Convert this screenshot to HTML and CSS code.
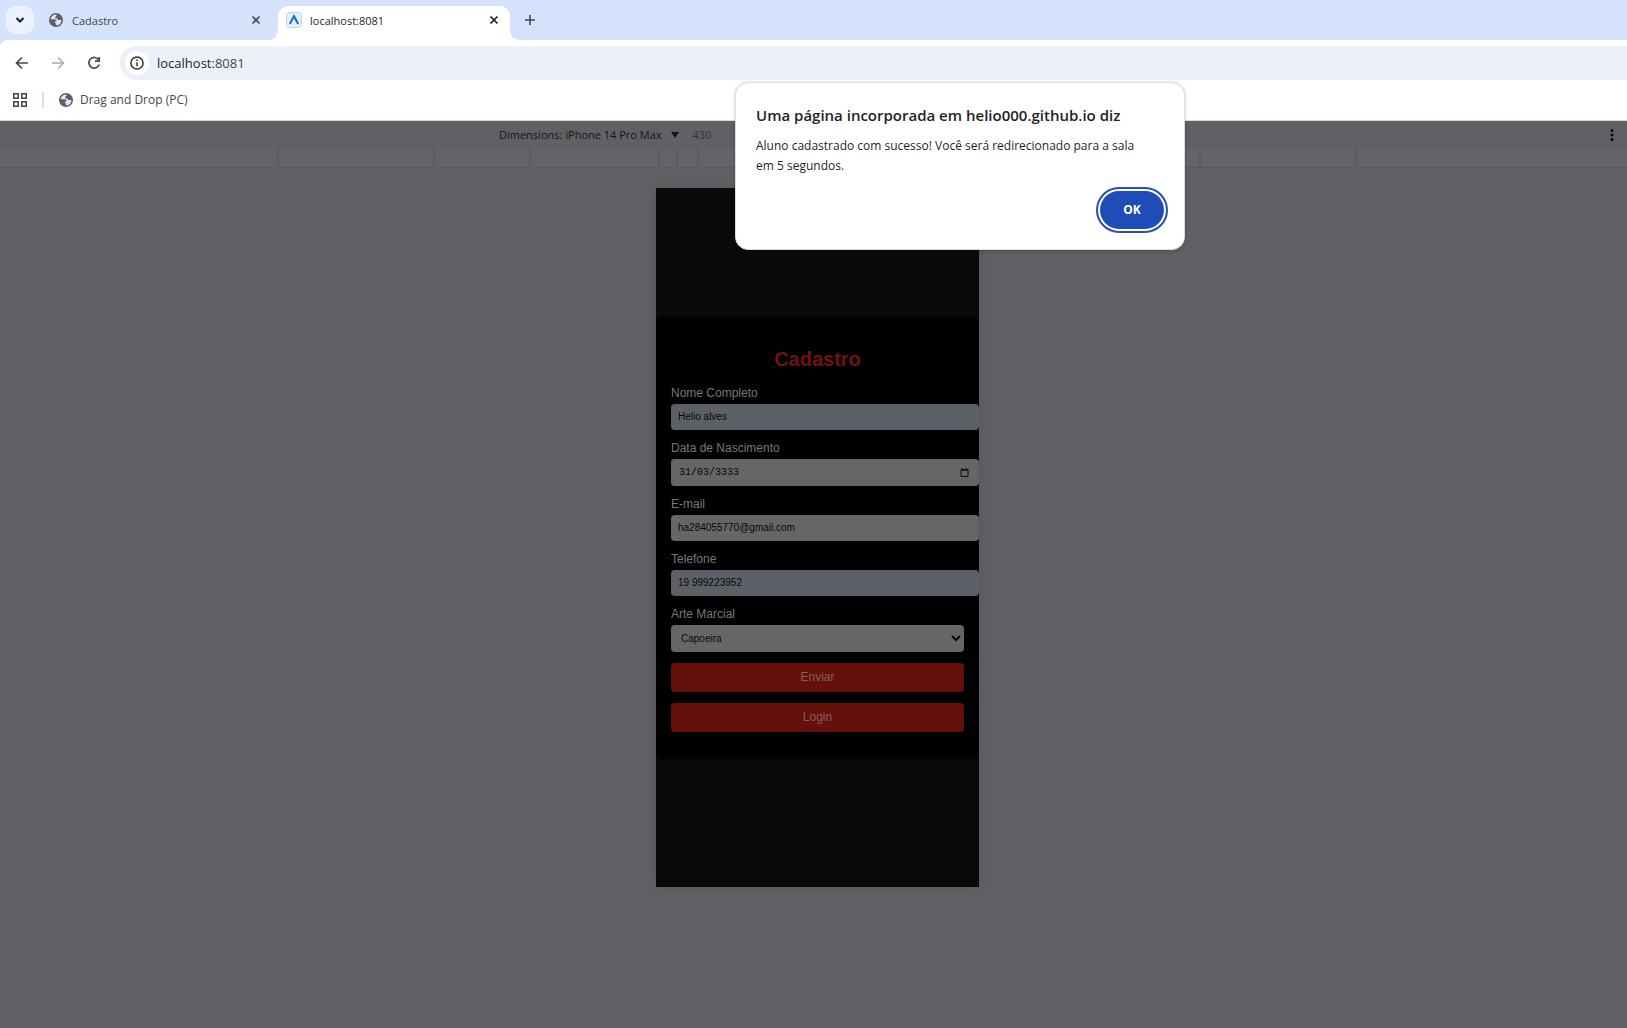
FILE: index.html
```html
<!DOCTYPE html>
<html lang="pt-BR">
<head>
<meta charset="utf-8">
<meta name="viewport" content="width=device-width, initial-scale=1">
<title>localhost:8081</title>
<link rel="stylesheet" href="styles.css">
</head>
<body>
<svg class="sprite" aria-hidden="true">
  <symbol id="globe" viewBox="0 0 14 14">
    <circle cx="7" cy="7" r="7" fill="#5c6065"/>
    <path d="M7.600 1.600C4.500 1.400 2 3.500 1.700 6.200h3.800c1.300 0 2.100.8 2.100 1.800v.6H5.900v1.700h1.200v2C10.300 12.400 12.500 10 12.400 7H10c-1 0-1.600-.6-1.600-1.500H6.200V3.700c.9 0 1.400-.8 1.400-2.100z" fill="#e0e9fb"/>
  </symbol>
  <symbol id="close" viewBox="0 0 10 10">
    <path d="M1.500 1.500l7 7M8.500 1.500l-7 7" stroke="currentColor" stroke-width="1.700" fill="none"/>
  </symbol>
</svg>

<header class="browser">
  <div class="tabstrip">
    <button class="tab-search" aria-label="Pesquisar guias"><svg width="10" height="8" viewBox="0 0 10 8"><path d="M1.500 2L5 5.500 8.500 2" fill="none" stroke="#1f1f1f" stroke-width="2"/></svg></button>
    <div class="tab">
      <svg class="globe"><use href="#globe"/></svg>
      <span class="tab-title">Cadastro</span>
      <button class="close" aria-label="Fechar"><svg><use href="#close"/></svg></button>
    </div>
    <div class="tab active">
      <svg class="favicon" viewBox="0 0 16 16"><rect x=".5" y=".5" width="15" height="15" rx="3" fill="#e3f2fe" stroke="#c5d3df"/><path d="M3.800 12L8 4.200 12.200 12" fill="none" stroke="#1668dc" stroke-width="2"/></svg>
      <span class="tab-title">localhost:8081</span>
      <button class="close" aria-label="Fechar"><svg><use href="#close"/></svg></button>
    </div>
    <button class="new-tab" aria-label="Nova guia"><svg width="12" height="12" viewBox="0 0 12 12"><path d="M6 1v10M1 6h10" stroke="#474747" stroke-width="1.600"/></svg></button>
  </div>
  <div class="toolbar">
    <nav class="nav">
      <button aria-label="Voltar"><svg width="14" height="14" viewBox="0 0 14 14"><path d="M13 7H2M7 1.500L1.500 7 7 12.500" fill="none" stroke="#474747" stroke-width="1.700"/></svg></button>
      <button aria-label="Avançar"><svg width="14" height="14" viewBox="0 0 14 14"><path d="M1 7h11M7 1.500L12.500 7 7 12.500" fill="none" stroke="#ababab" stroke-width="1.500"/></svg></button>
      <button aria-label="Recarregar"><svg width="14" height="14" viewBox="0 0 14 14"><path d="M11.700 4A5.300 5.300 0 1 0 12.200 8.500" fill="none" stroke="#474747" stroke-width="1.700"/><path d="M12.200 1v4.200H8" fill="none" stroke="#474747" stroke-width="1.700"/></svg></button>
    </nav>
    <div class="omnibox">
      <button class="site-info" aria-label="Informações do site"><svg width="14" height="14" viewBox="0 0 14 14"><circle cx="7" cy="7" r="6.100" fill="none" stroke="#333" stroke-width="1.500"/><path d="M7 6.200v4M7 3.500v1.500" stroke="#333" stroke-width="1.500"/></svg></button>
      <div class="url">localhost<span>:8081</span></div>
    </div>
  </div>
  <div class="bookmarks">
    <button class="apps" aria-label="Grupos de guias"><svg width="14" height="14" viewBox="0 0 14 14"><path d="M.8.8h4.400v4.400H.8zM8.800.8h4.400v4.400H8.800zM.8 8.800h4.400v4.400H.8zM8.800 8.800h4.400v4.400H8.800z" fill="none" stroke="#474747" stroke-width="1.600"/></svg></button>
    <a class="bookmark" href="#"><svg class="globe"><use href="#globe"/></svg>Drag and Drop (PC)</a>
  </div>
</header>

<main class="devtools">
  <div class="device-bar">
    <button class="device">Dimensions: iPhone 14 Pro Max <svg width="8" height="6" viewBox="0 0 8 6"><path d="M0 0h8L4 6z" fill="#151515"/></svg></button>
    <span class="device-width">430</span>
    <button class="more" aria-label="Mais opções"><svg width="4" height="12" viewBox="0 0 4 12"><circle cx="2" cy="1.600" r="1.500"/><circle cx="2" cy="6" r="1.500"/><circle cx="2" cy="10.400" r="1.500"/></svg></button>
  </div>
  <div class="ruler"><i class="w156"></i><i class="w96"></i><i class="w129"></i><i class="w18"></i><i class="w21"></i><i class="mid"></i><i class="w21"></i><i class="w18"></i><i class="w129"></i><i class="w96"></i><i class="last"></i></div>
  <div class="stage">
    <div class="phone">
      <form class="card">
        <h1>Cadastro</h1>
        <label for="nome">Nome Completo</label>
        <input class="filled" id="nome" type="text" value="Helio alves">
        <label for="data">Data de Nascimento</label>
        <div class="date">
          <input id="data" type="text" inputmode="numeric" value="31/03/3333">
          <svg width="9" height="9" viewBox="0 0 9 9"><path d="M1 1.500h7v7H1zM1 2.200h7M2.500 0v2M6.500 0v2" fill="none" stroke="#111"/></svg>
        </div>
        <label for="email">E-mail</label>
        <input id="email" type="email" value="ha284055770@gmail.com">
        <label for="fone">Telefone</label>
        <input class="filled" id="fone" type="tel" value="19 999223952">
        <label for="arte">Arte Marcial</label>
        <select id="arte"><option>Capoeira</option></select>
        <button type="button">Enviar</button>
        <button type="button">Login</button>
      </form>
    </div>
  </div>
</main>

<div class="dialog" role="alertdialog" aria-labelledby="dlg-title" aria-describedby="dlg-text">
  <h2 id="dlg-title">Uma página incorporada em helio000.github.io diz</h2>
  <p id="dlg-text">Aluno cadastrado com sucesso! Você será redirecionado para a sala em 5 segundos.</p>
  <button>OK</button>
</div>
</body>
</html>
```

FILE: styles.css
```css
* { box-sizing: border-box; }

body {
  margin: 0;
  min-height: 100vh;
  display: flex;
  flex-direction: column;
  position: relative;
  overflow-x: hidden;
  font: 12px/16px "Open Sans", "Noto Sans", sans-serif;
  color: #1f1f1f;
  background: #606164;
}

button {
  margin: 0;
  padding: 0;
  border: 0;
  background: none;
  font: inherit;
  color: inherit;
}

svg { display: block; flex: none; }
.sprite { position: absolute; width: 0; height: 0; }
.globe { width: 14px; height: 14px; }

/* Browser chrome */
.browser { background: #fff; border-bottom: 1px solid #d5d9dc; }

.tabstrip {
  display: flex;
  align-items: center;
  height: 40px;
  padding-left: 6px;
  background: #d4e2fc;
}

.tab-search {
  display: grid;
  place-items: center;
  width: 28px;
  height: 28px;
  margin-right: 4px;
  border-radius: 10px;
  background: #ebf2fd;
}

.tab {
  display: flex;
  align-items: center;
  gap: 9px;
  width: 240px;
  height: 28px;
  padding: 0 17px 0 11px;
  color: #474747;
}

.tab-title { flex: 1; font-size: 11px; line-height: 16px; padding-top: 1px; }

.tab.active {
  position: relative;
  align-self: flex-end;
  width: 232px;
  height: 34px;
  padding: 0 11px 6px 8px;
  gap: 8px;
  border-radius: 10px 10px 0 0;
  background: #fff;
  color: #1f1f1f;
}

.tab.active::before,
.tab.active::after {
  content: "";
  position: absolute;
  bottom: 0;
  width: 10px;
  height: 10px;
}

.tab.active::before { right: 100%; background: radial-gradient(circle at 0 0, transparent 10px, #fff 10px); }
.tab.active::after { left: 100%; background: radial-gradient(circle at 100% 0, transparent 10px, #fff 10px); }

.favicon { width: 16px; height: 16px; }
.close svg { width: 10px; height: 10px; }
.new-tab { margin-left: 14px; }

.toolbar {
  display: flex;
  align-items: center;
  height: 46px;
  padding-left: 15px;
  position: relative;
}

/* Rounded upper left corner where the toolbar meets the tab strip */
.toolbar::before {
  content: "";
  position: absolute;
  top: 0;
  left: 0;
  width: 8px;
  height: 8px;
  background: radial-gradient(circle at 100% 100%, #fff 8px, #d4e2fc 8px);
}

.nav { display: flex; gap: 22px; margin-right: 19px; }

.omnibox {
  flex: 1;
  display: flex;
  align-items: center;
  gap: 8px;
  height: 34px;
  padding-left: 5px;
  border-radius: 17px 0 0 17px;
  background: #ecf0fa;
}

.site-info {
  display: grid;
  place-items: center;
  width: 24px;
  height: 24px;
  border-radius: 50%;
  background: #fff;
}

.url { font-size: 13px; }
.url span { color: #474747; }

.bookmarks {
  display: flex;
  align-items: center;
  height: 34px;
  padding: 0 13px 6px;
}

.apps { padding-right: 15px; border-right: 2px solid #d0e0fc; height: 16px; }

.bookmark {
  display: flex;
  align-items: center;
  gap: 7px;
  margin-left: 15px;
  color: #474747;
  text-decoration: none;
}

/* Device toolbar and ruler */
.devtools { flex: 1; display: flex; flex-direction: column; }

.device-bar {
  display: flex;
  align-items: center;
  height: 26px;
  padding: 1px 13px 0 499px;
  font-size: 11px;
  color: #151515;
}

.device { display: flex; align-items: center; gap: 9px; }
.device-width { margin-left: 14px; color: #333435; }
.more { margin-left: auto; }

.ruler {
  display: flex;
  justify-content: center;
  height: 21px;
  padding: 0 0 1px 7px;
  border: solid #565a68;
  border-width: 1px 0;
  background: #636465;
}

.ruler i { flex: none; border-left: 2px solid #565c6b; }
.ruler .last { width: 158px; border-right: 2px solid #565c6b; }
.w156 { width: 156px; }
.w96 { width: 96px; }
.w129 { width: 129px; }
.w18 { width: 18px; }
.w21 { width: 21px; }
.mid { width: 238px; }

.stage {
  flex: 1;
  display: flex;
  justify-content: center;
  align-items: flex-start;
  padding: 20px 0 20px 8px;
}

/* Emulated page */
.phone {
  display: flex;
  align-items: center;
  width: 323px;
  min-height: 699px;
  overflow: hidden;
  background: #0a0a0a;
  box-shadow: 0 0 12px rgba(0, 0, 0, .12);
  font-family: "Liberation Sans", Arial, sans-serif;
}

.card {
  display: flex;
  flex-direction: column;
  flex: none;
  width: 322px;
  padding: 31px 14px 27px 15px;
  border-radius: 6px;
  background: #010101;
  box-shadow: 0 0 4px rgba(0, 0, 0, .4);
}

.card h1 {
  margin: 0 0 15px;
  font-size: 20px;
  line-height: 23px;
  text-align: center;
  color: #6c140f;
}

.card label {
  margin-bottom: 4px;
  font-size: 12px;
  line-height: 14px;
  color: #777;
}

.card input {
  width: 308px;
  height: 26px;
  margin: 0 0 11px;
  padding: 0 7px;
  border: 0;
  border-radius: 4px;
  background: #666;
  font: 10px "Liberation Sans", Arial, sans-serif;
  color: #080808;
}

.card .filled { background: #5d6066; }

.date { display: flex; align-items: center; width: 308px; margin-bottom: 11px; border-radius: 4px; background: #666; padding-right: 10px; }
.card .date input { flex: 1; width: auto; height: 27px; margin: 0; padding-left: 8px; font-family: "Liberation Mono", monospace; }

.card select {
  height: 27px;
  margin-bottom: 11px;
  padding-left: 6px;
  border: 0;
  border-radius: 4px;
  background: #666;
  font: 10px "Liberation Sans", Arial, sans-serif;
  color: #080808;
}

.card button {
  height: 29px;
  border-radius: 4px;
  background: #66100c;
  font-size: 12px;
  color: #80605e;
}

.card button + button { margin-top: 11px; }

/* Alert box */
.dialog {
  position: absolute;
  top: 82px;
  left: 735px;
  display: flex;
  flex-direction: column;
  width: 450px;
  padding: 21px 20px 20px;
  border: 1px solid #dcdcdc;
  border-radius: 13px;
  background: #fff;
  box-shadow: 0 1px 4px rgba(0, 0, 0, .2);
}

.dialog h2 {
  margin: 0 0 10px;
  font-size: 15px;
  font-weight: 600;
  line-height: 22px;
}

.dialog p { margin: 0; padding-right: 20px; font-size: 12px; line-height: 20px; }

.dialog button {
  align-self: flex-end;
  width: 64px;
  height: 38px;
  margin: 15px 0 0;
  border-radius: 19px;
  outline: 2px solid #2350bd;
  outline-offset: 2px;
  background: #204cb8;
  color: #fff;
  font-weight: 700;
}
```
